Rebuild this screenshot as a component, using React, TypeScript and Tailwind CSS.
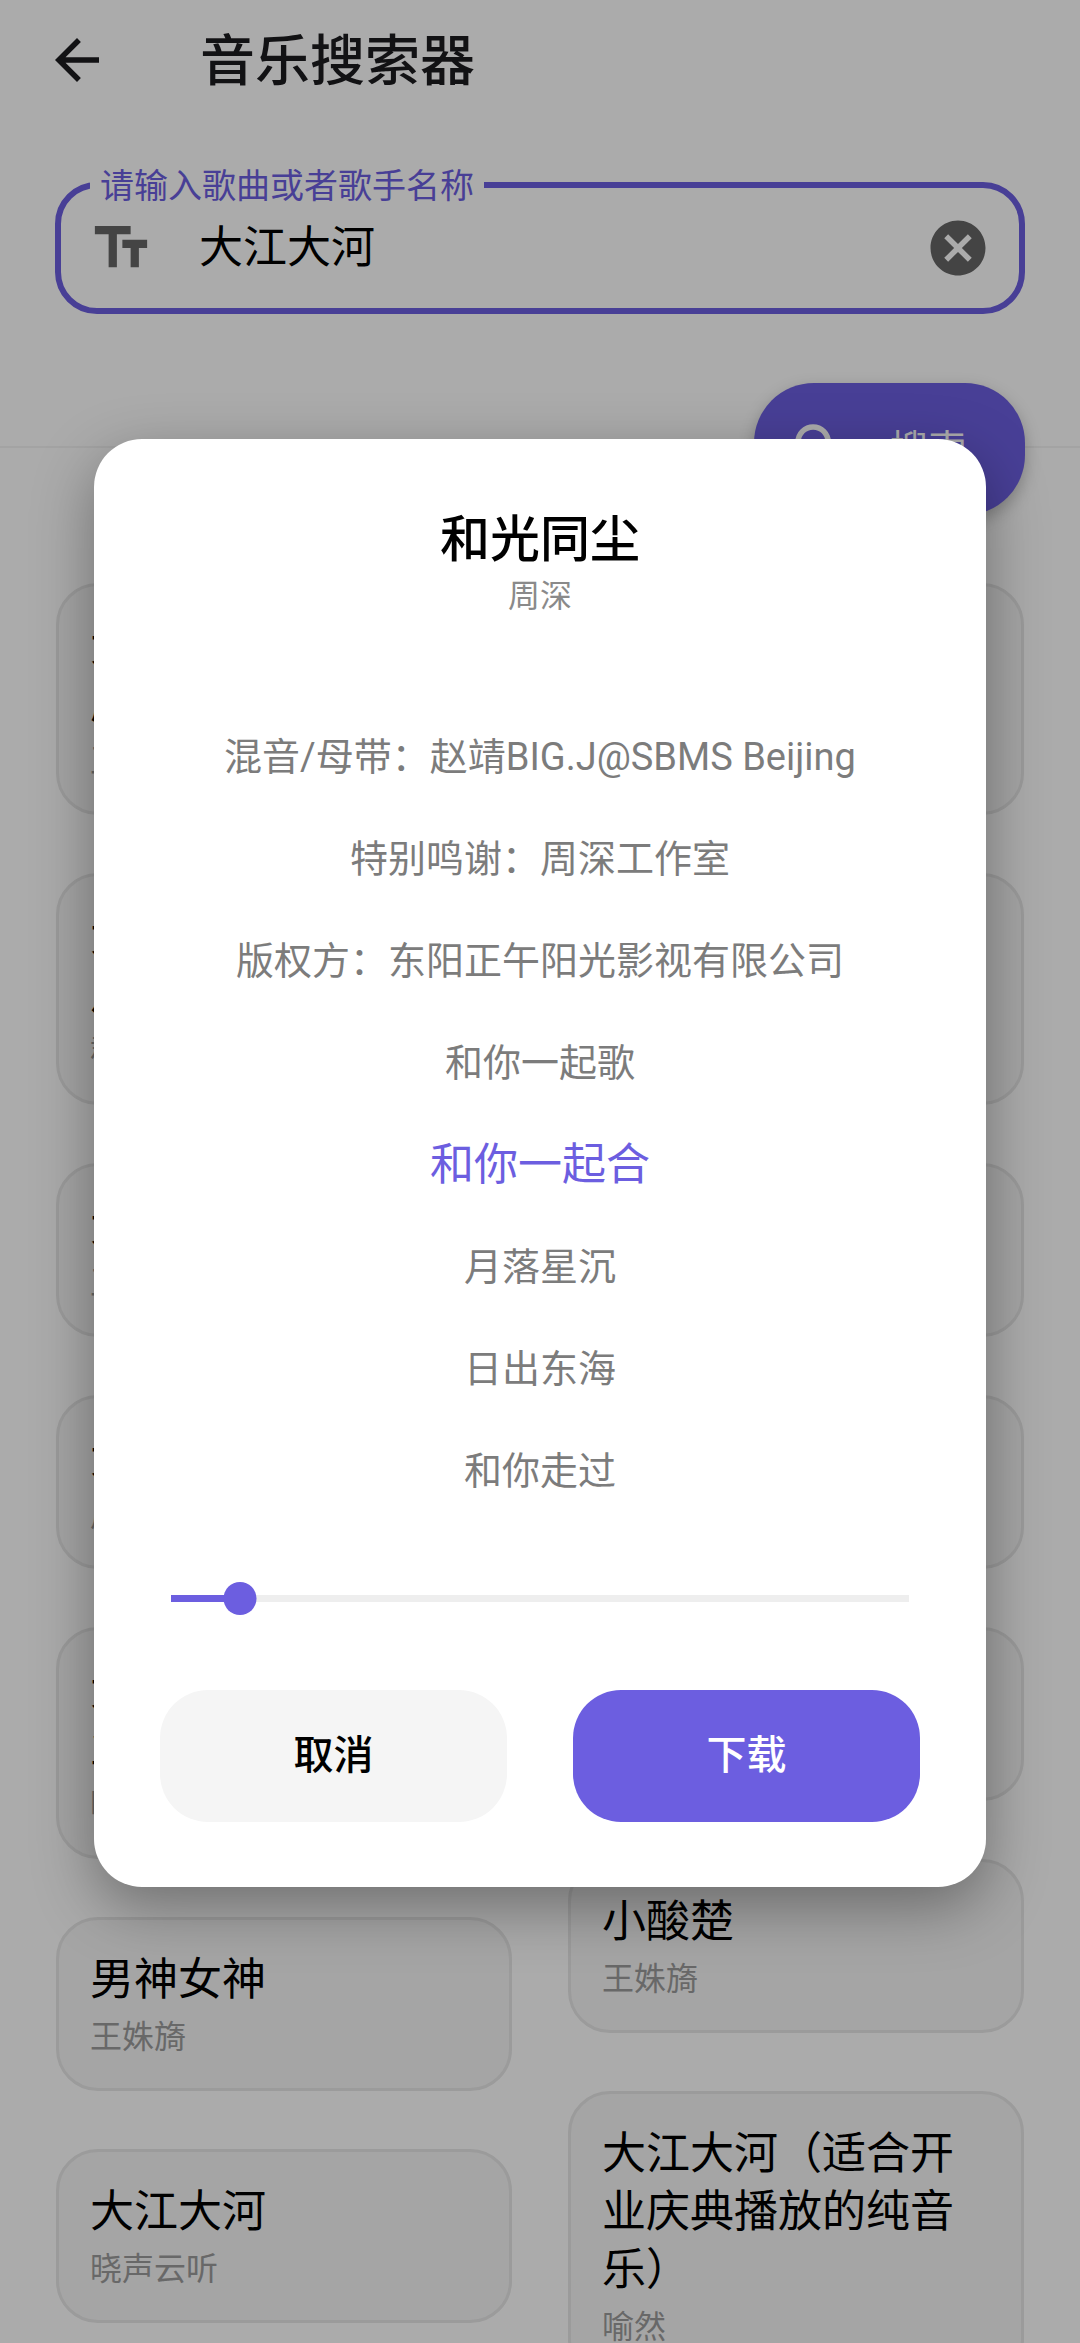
import { MdArrowBack, MdCancel, MdSearch, MdTextFields } from 'react-icons/md';

interface Song {
  title: string;
  artist: string;
}

const leftSongs: Song[] = [
  { title: '大江大河（电视剧原声带主题曲）', artist: '王姝旖' },
  { title: '大江大河（电视剧片尾曲完整版）', artist: '群星' },
  { title: '大江大河', artist: '王姝旖' },
  { title: '大江大河', artist: '周深' },
  { title: '大江大河（适合开业庆典播放的音乐）', artist: '喻然' },
  { title: '男神女神', artist: '王姝旖' },
  { title: '大江大河', artist: '晓声云听' },
];

const rightSongs: Song[] = [
  { title: '大江大河（电视剧原声带插曲）版本', artist: '王姝旖' },
  { title: '大江大河（电视剧片头曲完整版）', artist: '群星' },
  { title: '大江大河', artist: '周深' },
  { title: '和光同尘', artist: '周深' },
  { title: '大江大河', artist: '王姝旖' },
  { title: '小酸楚', artist: '王姝旖' },
  { title: '大江大河（适合开业庆典播放的纯音乐）', artist: '喻然' },
];

const lyrics = [
  '混音/母带：赵靖BIG.J@SBMS Beijing',
  '特别鸣谢：周深工作室',
  '版权方：东阳正午阳光影视有限公司',
  '和你一起歌',
  '和你一起合',
  '月落星沉',
  '日出东海',
  '和你走过',
];

const activeLyric = 4;
const progress = 9.35;

function SongCard({ song }: { song: Song }) {
  return (
    <div className="rounded-[42px] border-[3px] border-[#e7e7e7] bg-[#f6f6f6] pt-[31px] pr-[32px] pb-[29px] pl-[31px]">
      <div className="text-[44px] leading-[58px] text-black">{song.title}</div>
      <div className="mt-[7px] text-[32px] leading-[43px] text-[#9c9c9c]">{song.artist}</div>
    </div>
  );
}

function SongColumn({ songs }: { songs: Song[] }) {
  return (
    <div className="flex flex-col gap-[58px]">
      {songs.map((song, i) => (
        <SongCard key={i} song={song} />
      ))}
    </div>
  );
}

function LyricDialog() {
  return (
    <div className="flex w-[892px] flex-col rounded-[48px] bg-white px-[66px] pt-[71px] pb-[65px] shadow-[0_20px_60px_rgba(0,0,0,0.35)]">
      <div className="text-center text-[50px] leading-[60px] font-medium text-black">和光同尘</div>
      <div className="mt-[4px] text-center text-[32px] leading-[44px] text-[#8a8a8a]">周深</div>

      <div className="mt-[88px] flex flex-col">
        {lyrics.map((line, i) => (
          <div
            key={i}
            className={
              i === activeLyric
                ? 'flex h-[102px] items-center justify-center text-[44px] text-[#6c5ee0]'
                : 'flex h-[102px] items-center justify-center text-[38px] text-[#7c7c7c]'
            }
          >
            {line}
          </div>
        ))}
      </div>

      <div className="relative mx-[11px] mt-[60px] flex h-[33px] items-center">
        <div className="h-[7px] w-full bg-[#eeeeee]" />
        <div className="absolute left-0 h-[7px] bg-[#6c5ee0]" style={{ width: `${progress}%` }} />
        <div
          className="absolute h-[33px] w-[33px] -translate-x-1/2 rounded-full bg-[#6c5ee0]"
          style={{ left: `${progress}%` }}
        />
      </div>

      <div className="mt-[75px] flex gap-[66px]">
        <button className="h-[132px] flex-1 rounded-[48px] bg-[#f5f5f5] text-[40px] font-medium text-black">取消</button>
        <button className="h-[132px] flex-1 rounded-[48px] bg-[#6c5ee0] text-[40px] font-medium text-white">下载</button>
      </div>
    </div>
  );
}

export default function App() {
  return (
    <div className="relative h-[2343px] w-[1080px] overflow-hidden bg-white font-['Roboto','Noto_Sans_CJK_SC',sans-serif]">
      <div className="relative h-[448px] border-b-[2px] border-[#f3f3f3]">
        <header className="flex h-[120px] items-center pl-[44px] text-[#1c1b1f]">
          <MdArrowBack size={66} />
          <h1 className="mt-[2px] ml-[90px] text-[55px] font-medium">音乐搜索器</h1>
        </header>

        <div className="relative mx-[55px] mt-[62px] flex h-[132px] items-center rounded-[42px] border-[6px] border-[#6c5ee0] pr-[28px] pl-[27px]">
          <span className="absolute top-[-22px] left-[29px] bg-white px-[10px] text-[34px] leading-[40px] text-[#6c5ee0]">
            请输入歌曲或者歌手名称
          </span>
          <MdTextFields size={66} className="text-[#666666]" />
          <span className="ml-[45px] flex-1 text-[44px] text-black">大江大河</span>
          <MdCancel size={66} className="text-[#666666]" />
        </div>

        <button className="absolute top-[383px] right-[55px] flex h-[132px] w-[271px] items-center gap-[37px] rounded-[60px] bg-[#6c5ee0] pl-[33px] text-[38px] text-white shadow-[0_6px_16px_rgba(0,0,0,0.25)]">
          <MdSearch size={66} />
          <span>搜索</span>
        </button>
      </div>

      <div className="grid grid-cols-2 gap-x-[56px] px-[56px] pt-[135px]">
        <SongColumn songs={leftSongs} />
        <SongColumn songs={rightSongs} />
      </div>

      {/* scrim and lyric preview dialog */}
      <div className="absolute inset-0 flex items-start justify-center bg-black/[0.33] pt-[439px]">
        <LyricDialog />
      </div>
    </div>
  );
}
